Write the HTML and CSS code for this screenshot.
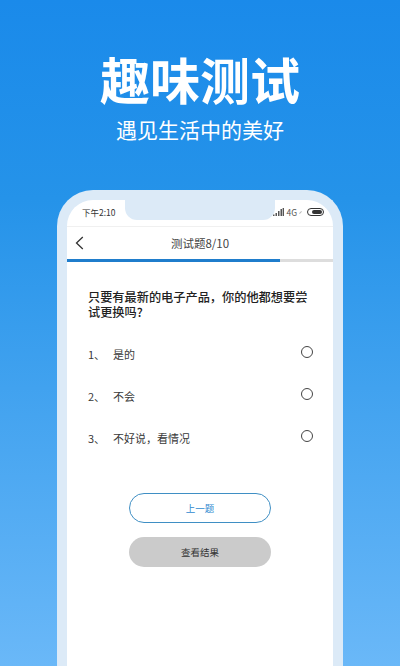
FILE: index.html
```html
<!DOCTYPE html>
<html lang="zh">
<head>
<meta charset="utf-8">
<title>趣味测试</title>
<link rel="stylesheet" href="styles.css">
</head>
<body>
<div class="screen">
  <h1 class="title">趣味测试</h1>
  <p class="subtitle">遇见生活中的美好</p>
  <div class="phone">
    <div class="notch"></div>
    <div class="status">
      <span class="time">下午2:10</span>
      <span class="indicators">
        <svg class="signal" width="11" height="8" viewBox="0 0 11 8"><path d="M0 6.5h1.5V8H0zM2.5 5h1.5v3H2.5zM5 3h1.5v5H5zM7.5 1H9v7H7.5z" fill="#555"/><path d="M9.6 0H11v8H9.6z" fill="#555"/></svg>
        <span class="net">4G</span>
        <span class="tick"></span>
        <span class="battery"><span class="battery-fill"></span></span>
      </span>
    </div>
    <div class="nav">
      <svg class="back" width="9" height="14" viewBox="0 0 9 14"><path d="M7.8 1L1.5 7l6.3 6" fill="none" stroke="#333" stroke-width="1.3"/></svg>
      <span class="nav-title">测试题8/10</span>
    </div>
    <div class="progress"><div class="progress-fill"></div></div>
    <div class="content">
      <p class="question">只要有最新的电子产品，你的他都想要尝试更换吗?</p>
      <div class="option"><span class="num">1、</span><span class="label">是的</span><span class="radio"></span></div>
      <div class="option"><span class="num">2、</span><span class="label">不会</span><span class="radio"></span></div>
      <div class="option"><span class="num">3、</span><span class="label">不好说，看情况</span><span class="radio"></span></div>
      <div class="buttons">
        <div class="btn btn-prev">上一题</div>
        <div class="btn btn-result">查看结果</div>
      </div>
    </div>
  </div>
</div>
</body>
</html>
```
FILE: styles.css
```css
* { box-sizing: border-box; }
html, body { margin: 0; padding: 0; }
body {
  width: 400px;
  height: 666px;
  overflow: hidden;
  font-family: "Noto Sans CJK SC", "Noto Sans", sans-serif;
}
.screen {
  height: 666px;
  display: flex;
  flex-direction: column;
  align-items: center;
  padding-top: 47px;
  background: linear-gradient(180deg, #1a8aea 0%, #2593e9 30%, #6ab8f8 100%);
  color: #fff;
}
.title {
  margin: 0;
  font-size: 50px;
  line-height: 62px;
  font-weight: 700;
}
.subtitle {
  margin: 5px 0 0;
  font-size: 21px;
  line-height: 30px;
}
.phone {
  position: relative;
  margin-top: 46px;
  width: 286px;
  flex: 1;
  background: #fff;
  border: 10px solid #dceaf7;
  border-bottom: 0;
  border-radius: 36px 36px 0 0;
  color: #333;
}
.notch {
  position: absolute;
  left: 58px;
  top: -1px;
  width: 150px;
  height: 21px;
  background: #dceaf7;
  border-radius: 0 0 12px 12px;
}
.status {
  height: 27px;
  display: flex;
  align-items: center;
  justify-content: space-between;
  padding: 0 9px 2px 15px;
  font-size: 8.5px;
  color: #333;
  border-bottom: 1px solid #f0f0f0;
}
.indicators { display: flex; align-items: center; gap: 2px; }
.net { font-size: 8.5px; color: #555; }
.tick { width: 3px; height: 1px; background: #bbb; transform: rotate(-45deg); margin-right: 1px; }
.battery {
  width: 17px;
  height: 8px;
  border: 1px solid #333;
  border-radius: 4px;
  padding: 1px;
  display: flex;
  justify-content: flex-end;
  margin-left: 2px;
}
.battery-fill { width: 10px; height: 100%; background: #333; border-radius: 2px; }
.nav {
  position: relative;
  height: 32px;
  display: flex;
  align-items: center;
  justify-content: center;
}
.back { position: absolute; left: 8px; top: 9px; }
.nav-title { font-size: 11.5px; color: #444; }
.progress { height: 3px; background: #dddddd; }
.progress-fill { width: 213px; height: 100%; background: #1f7dcc; }
.content { padding: 28px 20px 0 21px; }
.question {
  margin: 0 0 20px;
  font-size: 12.2px;
  line-height: 15px;
  font-weight: 500;
  color: #222;
}
.option {
  display: flex;
  height: 42px;
  padding-top: 6px;
  font-size: 11px;
  line-height: 16px;
  color: #3a3a3a;
}
.num { width: 25px; }
.label { flex: 1; }
.radio {
  width: 12px;
  height: 12px;
  border: 1px solid #444;
  border-radius: 50%;
  background: #fff;
}
.buttons {
  display: flex;
  flex-direction: column;
  align-items: center;
  gap: 14px;
  margin-top: 27px;
  margin-left: -1px;
}
.btn {
  width: 142px;
  height: 30px;
  border-radius: 15px;
  display: flex;
  align-items: center;
  justify-content: center;
  font-size: 9.5px;
}
.btn-prev { border: 1.5px solid #3f8fc4; color: #2f8ad0; background: #fff; }
.btn-result { background: #cbcbcb; color: #333; }
```
